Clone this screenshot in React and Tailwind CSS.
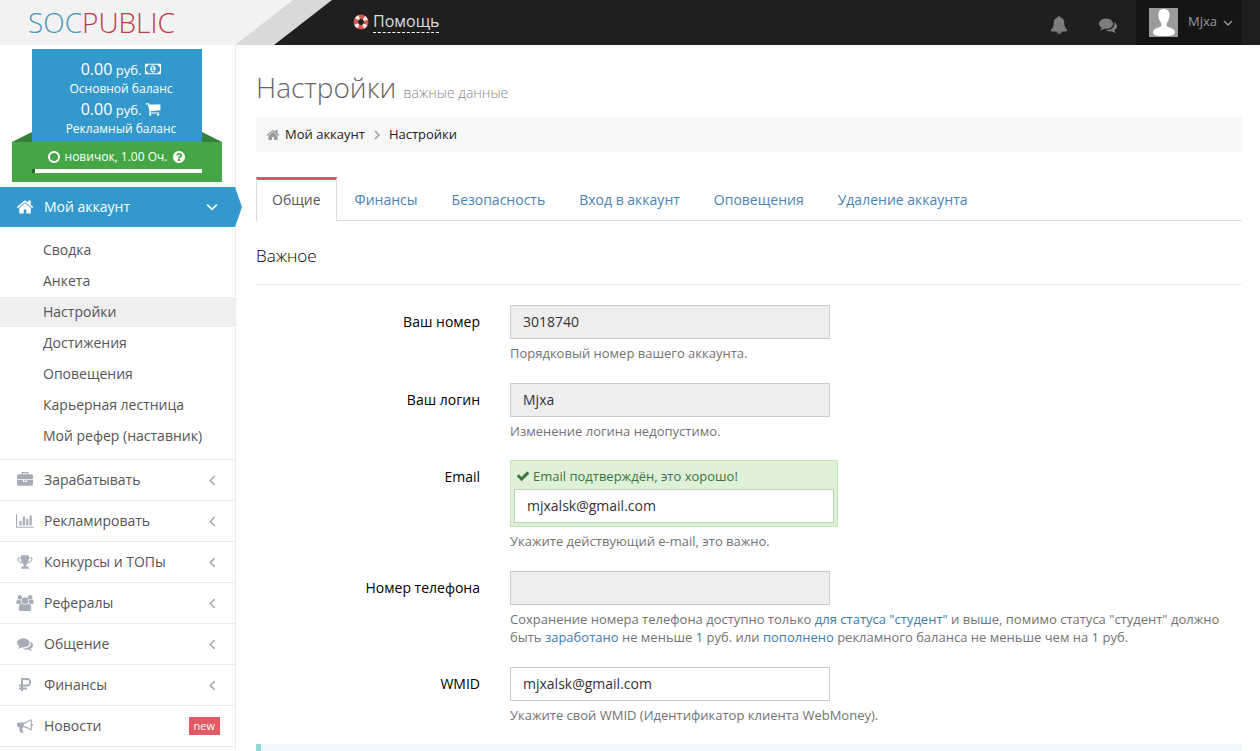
import React, { useState } from 'react';

const ICONS = {
  home: {
    box: '0 0 1792 1792',
    d: 'M1472 992v480q0 26-19 45t-45 19h-384v-384h-256v384h-384q-26 0-45-19t-19-45v-480q0-1 .5-3t.5-3l575-474 575 474q1 2 1 6zm223-69l-62 74q-8 9-21 11h-3q-13 0-21-7l-692-577-692 577q-12 8-24 7-13-2-21-11l-62-74q-8-10-7-23.5t11-21.5l719-599q32-26 76-26t76 26l244 204v-195q0-14 9-23t23-9h192q14 0 23 9t9 23v408l219 182q10 8 11 21.5t-7 23.5z',
  },
  bell: {
    box: '0 0 1792 1792',
    d: 'M912 1696q0-16-16-16-59 0-101.5-42.5t-42.5-101.5q0-16-16-16t-16 16q0 73 51.5 124.5t124.5 51.5q16 0 16-16zm816-288q0 52-38 90t-90 38h-448q0 106-75 181t-181 75-181-75-75-181h-448q-52 0-90-38t-38-90q50-42 91-88t85-119.5 74.5-158.5 50-206 19.5-260q0-152 117-282.5t307-158.5q-8-19-8-39 0-40 28-68t68-28 68 28 28 68q0 20-8 39 190 28 307 158.5t117 282.5q0 139 19.5 260t50 206 74.5 158.5 85 119.5 91 88z',
  },
  comments: {
    box: '0 0 1792 1792',
    d: 'M1408 768q0 139-94 257t-256.5 186.5-353.5 68.5q-86 0-176-16-124 88-278 128-36 9-86 16h-3q-11 0-20.5-8t-11.5-21q-1-3-1-6.5t.5-6.5 2-6l2.5-5 3.5-5.5 4-5 4.5-5 4-4.5q5-6 23-25t26-29.5 22.5-29 25-38.5 20.5-44q-124-72-195-177t-71-224q0-139 94-257t256.5-186.5 353.5-68.5 353.5 68.5 256.5 186.5 94 257zm384 256q0 120-71 224.5t-195 176.5q10 24 20.5 44t25 38.5 22.5 29 26 29.5 23 25q1 1 4 4.5t4.5 5 4 5 3.5 5.5l2.5 5 2 6 .5 6.5-1 6.5q-3 14-13 22t-22 7q-50-7-86-16-154-40-278-128-90 16-176 16-271 0-472-132 58 4 88 4 161 0 309-45t264-129q125-92 192-212t67-254q0-77-23-152 129 71 204 178t75 230z',
  },
  briefcase: {
    box: '0 0 1792 1792',
    d: 'M640 256h512v-128h-512v128zm1152 640v480q0 66-47 113t-113 47h-1472q-66 0-113-47t-47-113v-480h672v160q0 26 19 45t45 19h320q26 0 45-19t19-45v-160h672zm-768 0v128h-256v-128h256zm768-480v384h-1792v-384q0-66 47-113t113-47h352v-160q0-40 28-68t68-28h576q40 0 68 28t28 68v160h352q66 0 113 47t47 113z',
  },
  chart: {
    box: '0 0 2048 1792',
    d: 'M640 896v512h-256v-512h256zm384-512v1024h-256v-1024h256zm1024 1152v128h-2048v-1536h128v1408h1920zm-640-896v768h-256v-768h256zm384-384v1152h-256v-1152h256z',
  },
  trophy: {
    box: '0 0 1792 1792',
    d: 'M522 883q-74-162-74-371h-256v96q0 78 94.5 162t235.5 113zm1078-275v-96h-256q0 209-74 371 141-29 235.5-113t94.5-162zm128-128v128q0 71-41.5 143t-112 130-173 97.5-215.5 44.5q-42 54-95 95-38 34-52.5 72.5t-14.5 89.5q0 54 30.5 91t97.5 37q75 0 133.5 45.5t58.5 114.5v64q0 14-9 23t-23 9h-832q-14 0-23-9t-9-23v-64q0-69 58.5-114.5t133.5-45.5q67 0 97.5-37t30.5-91q0-51-14.5-89.5t-52.5-72.5q-53-41-95-95-113-5-215.5-44.5t-173-97.5-112-130-41.5-143v-128q0-40 28-68t68-28h288v-96q0-66 47-113t113-47h576q66 0 113 47t47 113v96h288q40 0 68 28t28 68z',
  },
  group: {
    box: '0 0 1920 1792',
    d: 'M593 896q-162 5-265 128h-134q-82 0-138-40.5t-56-118.5q0-353 124-353 6 0 43.5 21t97.5 42.5 119 21.5q67 0 133-23-5 37-5 66 0 159 81 293zm1071 637q0 120-73 189.5t-194 69.5h-874q-121 0-194-69.5t-73-189.5q0-53 3.5-103.5t14-109 26.5-108.5 43-97.5 62-81 85.5-53.5 111.5-20q10 0 43 21.5t73 48 107 48 135 21.5 135-21.5 107-48 73-48 43-21.5q61 0 111.5 20t85.5 53.5 62 81 43 97.5 26.5 108.5 14 109 3.5 103.5zm-1024-1277q0 106-75 181t-181 75-181-75-75-181 75-181 181-75 181 75 75 181zm704 384q0 159-112.5 271.5t-271.5 112.5-271.5-112.5-112.5-271.5 112.5-271.5 271.5-112.5 271.5 112.5 112.5 271.5zm576 225q0 78-56 118.5t-138 40.5h-134q-103-123-265-128 81-134 81-293 0-29-5-66 66 23 133 23 59 0 119-21.5t97.5-42.5 43.5-21q124 0 124 353zm-128-609q0 106-75 181t-181 75-181-75-75-181 75-181 181-75 181 75 75 181z',
  },
  bullhorn: {
    box: '0 0 1792 1792',
    d: 'M1664 640q53 0 90.5 37.5t37.5 90.5-37.5 90.5-90.5 37.5v384q0 52-38 90t-90 38q-417-347-812-380-58 19-91 66t-31 100.5 40 92.5q-20 33-23 65.5t6 58 33.5 55 48 50 61.5 50.5q-29 58-111.5 83t-168.5 11.5-132-55.5q-7-23-29.5-87.5t-32-94.5-23-89-15-101 3.5-98.5 22-110.5h-122q-66 0-113-47t-47-113v-192q0-66 47-113t113-47h480q435 0 896-384 52 0 90 38t38 90v384zm-128 604v-954q-394 302-768 343v270q377 42 768 341z',
  },
  question: {
    box: '0 0 1792 1792',
    d: 'M1024 1376v-192q0-14-9-23t-23-9h-192q-14 0-23 9t-9 23v192q0 14 9 23t23 9h192q14 0 23-9t9-23zm256-672q0-88-55.5-163t-138.5-116-170-41q-243 0-371 213-15 24 8 42l132 100q7 6 19 6 16 0 25-12 53-68 86-92 34-24 86-24 48 0 85.5 26t37.5 59q0 38-20 61t-68 45q-63 28-115.5 86.5t-52.5 125.5v36q0 14 9 23t23 9h192q14 0 23-9t9-23q0-19 21.5-49.5t54.5-49.5q32-18 49-28.5t46-35 44.5-48 28-60.5 12.5-81zm384 192q0 209-103 385.5t-279.5 279.5-385.5 103-385.5-103-279.5-279.5-103-385.5 103-385.5 279.5-279.5 385.5-103 385.5 103 279.5 279.5 103 385.5z',
  },
  cart: {
    box: '0 0 1792 1792',
    d: 'M704 1536q0 52-38 90t-90 38-90-38-38-90 38-90 90-38 90 38 38 90zm896 0q0 52-38 90t-90 38-90-38-38-90 38-90 90-38 90 38 38 90zm128-1088v512q0 24-16.5 42.5t-40.5 21.5l-1044 122q13 60 13 70 0 16-24 64h920q26 0 45 19t19 45-19 45-45 19h-1024q-26 0-45-19t-19-45q0-11 8-31.5t16-36 21.5-40 15.5-29.5l-177-823h-204q-26 0-45-19t-19-45 19-45 45-19h256q16 0 28.5 6.5t19.5 15.5 13 24.5 8 26 5.5 29.5 4.5 26h1201q26 0 45 19t19 45z',
  },
  money: {
    box: '0 0 1920 1792',
    d: 'M768 1152h384v-96h-128v-448h-114l-148 137 77 80q42-37 55-57h2v288h-128v96zm512-256q0 70-21 142t-59.5 134-101.5 101-138 39-138-39-101.5-101-59.5-134-21-142 21-142 59.5-134 101.5-101 138-39 138 39 101.5 101 59.5 134 21 142zm512 256v-512q-106 0-181-75t-75-181h-1152q0 106-75 181t-181 75v512q106 0 181 75t75 181h1152q0-106 75-181t181-75zm128-832v1152q0 26-19 45t-45 19h-1792q-26 0-45-19t-19-45v-1152q0-26 19-45t45-19h1792q26 0 45 19t19 45z',
  },
  check: {
    box: '0 0 1792 1792',
    d: 'M1671 566q0 40-28 68l-724 724-136 136q-28 28-68 28t-68-28l-136-136-362-362q-28-28-28-68t28-68l136-136q28-28 68-28t68 28l294 295 656-657q28-28 68-28t68 28l136 136q28 28 28 68z',
  },
};

function Icon({ name, className }) {
  if (name === 'ruble') {
    return (
      <svg viewBox="0 0 16 16" className={className} fill="none" stroke="currentColor" strokeWidth="2" aria-hidden="true">
        <path d="M5 14V2h5a3.200 3.200 0 0 1 0 6.500H2M2 11.500h8" />
      </svg>
    );
  }
  return (
    <svg viewBox={ICONS[name].box} className={className} fill="currentColor" aria-hidden="true">
      <path d={ICONS[name].d} />
    </svg>
  );
}

function Angle({ dir, className }) {
  const points = { down: '1,3 5,7 9,3', left: '7,1 3,5 7,9', right: '3,1 7,5 3,9' };
  return (
    <svg viewBox="0 0 10 10" className={className} fill="none" stroke="currentColor" strokeWidth="1.4" aria-hidden="true">
      <polyline points={points[dir]} />
    </svg>
  );
}

const submenu = ['Сводка', 'Анкета', 'Настройки', 'Достижения', 'Оповещения', 'Карьерная лестница', 'Мой рефер (наставник)'];

const menu = [
  { icon: 'briefcase', label: 'Зарабатывать' },
  { icon: 'chart', label: 'Рекламировать' },
  { icon: 'trophy', label: 'Конкурсы и ТОПы' },
  { icon: 'group', label: 'Рефералы' },
  { icon: 'comments', label: 'Общение' },
  { icon: 'ruble', label: 'Финансы' },
  { icon: 'bullhorn', label: 'Новости', badge: 'new' },
];

const tabs = ['Общие', 'Финансы', 'Безопасность', 'Вход в аккаунт', 'Оповещения', 'Удаление аккаунта'];

function Header() {
  return (
    <header className="flex h-[45px] bg-[#1f1f1f]">
      <div className="relative w-[332px] shrink-0">
        <svg viewBox="0 0 332 45" className="absolute inset-0 h-full w-full" aria-hidden="true">
          <path d="M0 0H332L274 45H0z" fill="#d9d9d9" />
          <path d="M0 0H293L235 45H0z" fill="#f2f2f2" />
        </svg>
        <a href="#" className="relative ml-7 block text-[28px] leading-[45px] font-light text-[#4a96bd]">
          SOC<span className="text-[#c03a48]">PUBLIC</span>
        </a>
      </div>
      <div className="flex grow items-start justify-between">
        <a href="#" className="ml-[21px] mt-[10px] flex items-center gap-1 text-base text-[#dddddd]">
          <svg viewBox="0 0 16 16" className="h-4 w-4" fill="none" aria-hidden="true">
            <circle cx="8" cy="8" r="5.2" stroke="#d2574f" strokeWidth="4.6" />
            <circle cx="8" cy="8" r="5.2" stroke="#f5ece8" strokeWidth="4.2" strokeDasharray="3.2 4.97" strokeDashoffset="-2.5" />
          </svg>
          <span className="border-b border-dashed border-white leading-[22px]">Помощь</span>
        </a>
        <div className="flex h-full items-center">
          <button type="button" aria-label="Уведомления" className="pt-1 text-[#7d7d7d]">
            <Icon name="bell" className="h-[18px] w-[18px]" />
          </button>
          <button type="button" aria-label="Сообщения" className="ml-[31px] pt-1 text-[#7d7d7d]">
            <Icon name="comments" className="h-[18px] w-[18px]" />
          </button>
          <button type="button" className="mr-[18px] ml-[19px] flex h-full items-center bg-[#151515] pr-[9px] pl-[13px] text-[13px] text-[#999999]">
            <svg viewBox="0 0 29 29" className="h-[29px] w-[29px]" aria-hidden="true">
              <path d="M0 0H29V29H0z" fill="#9b9b9b" />
              <path d="M14.500 1c4 0 6.500 2.500 6 7-.3 3-1.500 5-2.500 7-.8 2-.3 3.500 1 4 4 1 7 2.500 7 5.500S20 28 14.500 28 4 27.500 4 24.500 7 20 11 19c1.300-.5 1.800-2 1-4-1-2-2.500-4-2.500-7-.5-4.500 1-7 5-7z" fill="#fff" />
            </svg>
            <span className="ml-[10px] pb-[2px]">Mjxa</span>
            <Angle dir="down" className="ml-[6px] h-[10px] w-[10px]" />
          </button>
        </div>
      </div>
    </header>
  );
}

function Balance() {
  return (
    <div className="relative mt-1 mr-[13px] mb-[5px] ml-3 text-white">
      <svg viewBox="0 0 210 10" preserveAspectRatio="none" className="absolute top-[83px] left-0 h-[10px] w-full" aria-hidden="true">
        <path d="M0 10L20 0H190L210 10z" fill="#35803a" />
      </svg>
      <div className="relative mx-5 h-[93px] bg-[#3399cc] pt-[10px] pl-2 text-center text-xs leading-5">
        <p className="flex h-5 items-center justify-center gap-1 text-[13px]">
          <span><span className="text-[16px]">0.00</span> руб.</span>
          <Icon name="money" className="h-4 w-4" />
        </p>
        <p>Основной баланс</p>
        <p className="flex h-5 items-center justify-center gap-1 text-[13px]">
          <span><span className="text-[16px]">0.00</span> руб.</span>
          <Icon name="cart" className="h-4 w-4" />
        </p>
        <p>Рекламный баланс</p>
      </div>
      <div className="relative h-10 bg-[#45a645] px-5 pt-[5px] text-xs">
        <p className="flex items-center justify-center gap-[5px] leading-5">
          <svg viewBox="0 0 12 12" className="h-3 w-3" fill="none" stroke="currentColor" strokeWidth="2" aria-hidden="true">
            <circle cx="6" cy="6" r="5" />
          </svg>
          <span>новичок, 1.00 Оч.</span>
          <Icon name="question" className="h-[14px] w-[14px]" />
        </p>
        <div className="mt-[2px] h-1 border-l-[3px] border-[#256b25] bg-white" />
      </div>
    </div>
  );
}

function Sidebar() {
  return (
    <nav className="w-[236px] shrink-0 border-r border-[#ececec] text-sm text-[#555555]">
      <Balance />
      <a href="#" className="relative flex h-10 items-center bg-[#3399cc] pl-4 text-white">
        <Icon name="home" className="h-[18px] w-[18px]" />
        <span className="ml-[10px] grow">Мой аккаунт</span>
        <Angle dir="down" className="mr-[17px] h-3 w-3" />
        <svg viewBox="0 0 7 40" className="absolute top-0 left-full h-10 w-[7px]" aria-hidden="true">
          <path d="M0 0L7 20L0 40z" fill="#3399cc" />
        </svg>
      </a>
      <ul className="flex flex-col gap-px pt-2 pb-2">
        {submenu.map((item) => (
          <li key={item}>
            <a href="#" className={`block pl-[43px] leading-[30px] ${item === 'Настройки' ? 'bg-[#efefef]' : ''}`}>
              {item}
            </a>
          </li>
        ))}
      </ul>
      <ul className="border-b border-[#ececec]">
        {menu.map((item) => (
          <li key={item.label} className="border-t border-[#ececec]">
            <a href="#" className="flex h-10 items-center pr-[15px] pl-4">
              <span className="flex w-[18px] justify-center text-[#a7adb8]">
                <Icon name={item.icon} className="h-4 w-[18px]" />
              </span>
              <span className="ml-[10px] grow">{item.label}</span>
              {item.badge ? (
                <span className="bg-[#e25b64] px-[5px] text-[11px] leading-[18px] text-white">{item.badge}</span>
              ) : (
                <Angle dir="left" className="mr-[2px] h-[11px] w-[11px] text-[#aaaaaa]" />
              )}
            </a>
          </li>
        ))}
      </ul>
    </nav>
  );
}

function Field({ id, label, value, disabled, help }) {
  return (
    <div className="mt-[21px] flex first:mt-5">
      <label htmlFor={id} className="w-[224px] shrink-0 text-right leading-[34px] text-black">
        {label}
      </label>
      <div className="ml-[30px] grow">
        <input
          id={id}
          type="text"
          defaultValue={value}
          disabled={disabled}
          className="block h-[34px] w-[320px] border border-[#cccccc] bg-white px-3 pb-[2px] text-[#333333] disabled:bg-[#eeeeee]"
        />
        <p className="mt-[5px] text-[13px] leading-[18px] text-[#737373]">{help}</p>
      </div>
    </div>
  );
}

export default function App() {
  const [activeTab, setActiveTab] = useState('Общие');

  return (
    <div className="h-screen overflow-hidden bg-white font-['Open_Sans',sans-serif] text-sm">
      <Header />
      <div className="flex">
        <Sidebar />
        <main className="min-w-0 grow pr-[18px] pl-5">
          <h1 className="mt-[23px] text-[28px] leading-[38px] font-light text-[#666666]">
            Настройки <small className="text-sm text-[#888888]">важные данные</small>
          </h1>
          <div className="mt-[11px] flex h-[35px] items-center bg-[#f7f7f7] px-[10px] text-[13px] text-[#222222]">
            <Icon name="home" className="h-[14px] w-[14px] text-[#999999]" />
            <a href="#" className="ml-[5px]">Мой аккаунт</a>
            <Angle dir="right" className="mx-[7px] h-[10px] w-[10px] text-[#999999]" />
            <a href="#">Настройки</a>
          </div>
          <div role="tablist" className="mt-[25px] flex h-11 border-b border-[#dddddd]">
            {tabs.map((tab) => (
              <button
                key={tab}
                type="button"
                role="tab"
                aria-selected={tab === activeTab}
                onClick={() => setActiveTab(tab)}
                className={
                  tab === activeTab
                    ? 'mr-[2px] h-11 border-x border-t-[3px] border-x-[#dddddd] border-t-[#d05c6b] bg-white px-[15px] pb-[2px] text-[#555555]'
                    : 'mr-[2px] h-11 border-x border-t-[3px] border-transparent px-[15px] pb-[2px] text-[#4a84b5]'
                }
              >
                {tab}
              </button>
            ))}
          </div>
          <h2 className="mt-[25px] border-b border-[#eeeeee] pb-[18px] text-[17px] leading-[20px] font-light text-black">
            Важное
          </h2>
          <form>
            <Field id="number" label="Ваш номер" value="3018740" disabled help="Порядковый номер вашего аккаунта." />
            <Field id="login" label="Ваш логин" value="Mjxa" disabled help="Изменение логина недопустимо." />
            <div className="mt-5 flex">
              <label htmlFor="email" className="w-[224px] shrink-0 text-right leading-[34px] text-black">
                Email
              </label>
              <div className="ml-[30px] grow">
                <div className="w-[328px] border border-[#c5e5b9] bg-[#dff0d8] px-[3px] pb-[3px]">
                  <p className="flex items-center gap-[3px] pt-[2px] pl-[2px] text-[13px] leading-[26px] text-[#3c763d]">
                    <Icon name="check" className="h-[14px] w-[14px]" />
                    Email подтверждён, это хорошо!
                  </p>
                  <input
                    id="email"
                    type="text"
                    defaultValue="mjxalsk@gmail.com"
                    className="block h-[34px] w-full border border-[#b9d8b0] bg-white px-3 pb-[2px] text-[#333333]"
                  />
                </div>
                <p className="mt-[5px] text-[13px] leading-[18px] text-[#737373]">Укажите действующий e-mail, это важно.</p>
              </div>
            </div>
            <Field
              id="phone"
              label="Номер телефона"
              disabled
              help={
                <>
                  Сохранение номера телефона доступно только <a href="#" className="text-[#3a7cae]">для статуса "студент"</a> и выше, помимо статуса "студент" должно быть{' '}
                  <a href="#" className="text-[#3a7cae]">заработано</a> не меньше 1 руб. или{' '}
                  <a href="#" className="text-[#3a7cae]">пополнено</a> рекламного баланса не меньше чем на 1 руб.
                </>
              }
            />
            <Field id="wmid" label="WMID" value="mjxalsk@gmail.com" help="Укажите свой WMID (Идентификатор клиента WebMoney)." />
          </form>
          <div className="mt-5 h-14 border-l-[5px] border-[#91d9d6] bg-[#eef7fb]" />
        </main>
      </div>
    </div>
  );
}
